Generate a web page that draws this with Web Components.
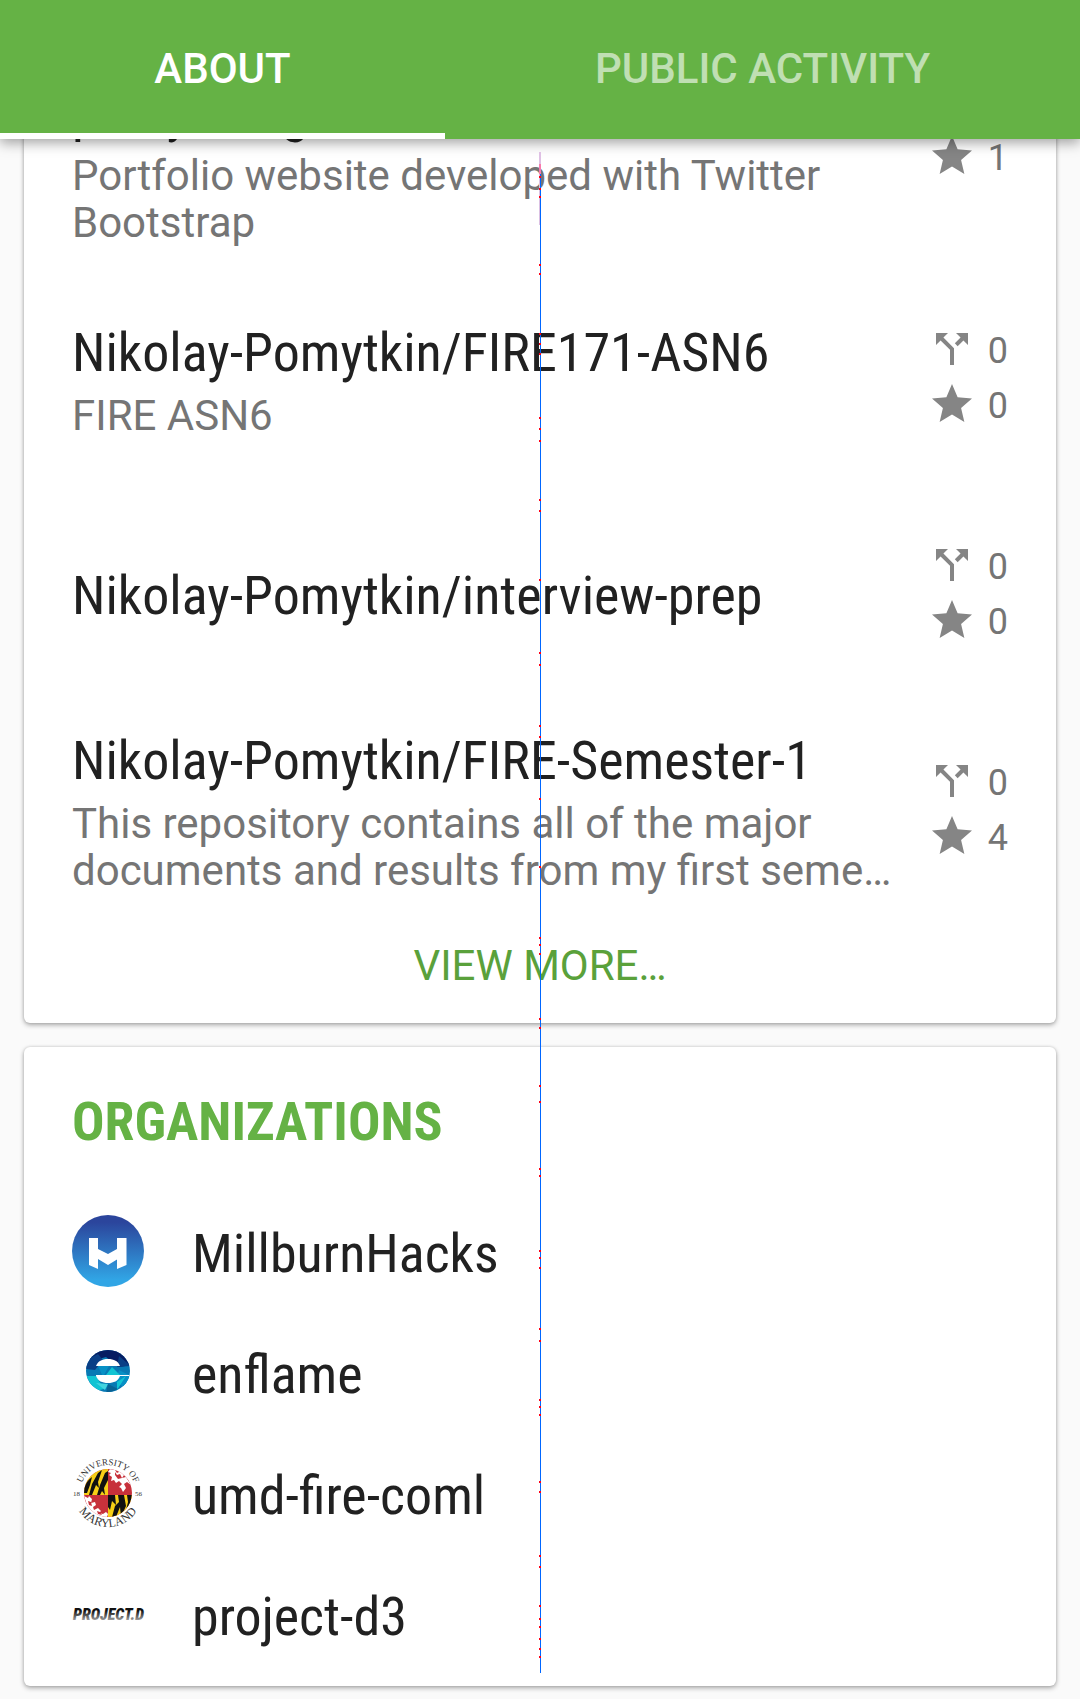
<!DOCTYPE html>
<html lang="en">
<head>
<meta charset="utf-8">
<meta name="viewport" content="width=device-width, initial-scale=1">
<title>Profile</title>
<style>
  body { margin: 0; background: #fafafa; font-family: Roboto, "Liberation Sans", sans-serif; color: #212121; }
  svg { overflow: visible; }
</style>
</head>
<body>
<profile-page>
  <tab-bar slot="tabs">
    <tab-item selected>ABOUT</tab-item>
    <tab-item>PUBLIC ACTIVITY</tab-item>
  </tab-bar>
  <info-card class="scrolled">
    <repo-row name="Nikolay-Pomytkin/&#10;pomytkin.github.io" forks="0" stars="1">Portfolio website developed with Twitter Bootstrap</repo-row>
    <repo-row name="Nikolay-Pomytkin/FIRE171-ASN6" forks="0" stars="0">FIRE ASN6</repo-row>
    <repo-row name="Nikolay-Pomytkin/interview-prep" forks="0" stars="0"></repo-row>
    <repo-row name="Nikolay-Pomytkin/FIRE-Semester-1" forks="0" stars="4">This repository contains all of the major documents and results from my first seme…</repo-row>
    <more-button>VIEW MORE…</more-button>
  </info-card>
  <info-card heading="ORGANIZATIONS">
    <org-row name="MillburnHacks">
      <svg width="72" height="72" viewBox="0 0 72 72"><defs><linearGradient id="mh" x2="0" y2="1"><stop offset=".1" stop-color="#2b459c"/><stop offset=".9" stop-color="#31a5e5"/></linearGradient></defs><circle cx="36" cy="36" r="36" fill="url(#mh)"/><path fill="#fff" d="M17 23h9v11l10 5 9-5V23h9.500v27l-9.500 4V44.500l-9 5.500-10-6v10l-9-4z"/></svg>
    </org-row>
    <org-row name="enflame">
      <svg width="72" height="72" viewBox="0 0 72 72"><defs><clipPath id="en"><ellipse cx="36" cy="35" rx="22" ry="21"/></clipPath></defs><g clip-path="url(#en)"><path fill="#0879b4" d="M12 12h48v48H12z"/><path fill="#061d62" d="M14 23l6-11h35l5 17-13 2-13-10-11 3z"/><path fill="#0a3f86" d="M14 24l12-6 5 6-8 10-9-1zM47 20l12 10-14 1z"/><path fill="#0790c5" d="M26 30h11l-6 11zM47 34l12 6-7 11-9-5z"/><path fill="#11c4d3" d="M40 31l8 8H34zM14 40h10l8 13-9 2zM45 46l9-6-9 14z"/><path fill="#42d3df" d="M24 47l12 1-3 6z"/><path fill="#086295" d="M36 48l10 5-12 5z"/><path fill="#fff" d="M24 30c2-5 6-7 12-7s10 2 12 7zM24 39h36v1H48c-2 5-6 7-12 7s-10-2-12-7z"/></g></svg>
    </org-row>
    <org-row name="umd-fire-coml">
      <svg width="72" height="72" viewBox="0 0 72 72"><defs><clipPath id="um"><circle cx="36" cy="36" r="24"/></clipPath><path id="ut" d="M8 36a28 28 0 0 1 56 0"/><path id="ub" d="M2 36a34 34 0 0 0 68 0"/></defs><g clip-path="url(#um)"><path fill="#c7313b" d="M12 10h48v52H12z"/><path fill="#f7cf16" d="M12 10h24v28H12zM36 38h24v24H36z"/><path fill="#111" d="M11 36c1-8 5-13 9-16l-2 8-3 8zM17 38l3-11 6-11 4-3-4 12 1 6-3-3-4 10zM25 38l3-10 5-12 3-2v9l-4 8 1 7-3-4-2 4zM36 38h7l1 10-4-4-2 9-2-3zM46 38h6l2 11-5 11-1-10-4 10h-4l3-11 4-4zM55 38h5l-2 9-4 6 2-8z"/><path fill="#fff" d="M38 12l5 1 2 3 4-2 3 4-2 3 4-1 5 8-4-3-3 2 2 4-3 4-2-4-2-1 3-3-3-3-3 2-2-3-3 1 1-4-3-2 2-2-3-1zM12 39l4 2 1-2 3 3-1 4 4-1 1 3-3 2 1 3 4-2 3 3-2 2 4 1 3-2 2 2-1 3h-7l-8-5-5-7z"/><path fill="#c7313b" d="M43 15l2 3 3-1 2 4-4 1-3-4zM16 44l3 1 1 4-3-1zM25 54l3 1 2 3-4-1z"/></g><g font-family="Liberation Serif, serif" fill="#333"><text font-size="9" text-anchor="middle"><textPath href="#ut" startOffset="50%">UNIVERSITY OF</textPath></text><text font-size="12" text-anchor="middle"><textPath href="#ub" startOffset="50%">MARYLAND</textPath></text><text x="1" y="39" font-size="7">18</text><text x="63" y="39" font-size="7">56</text></g></svg>
    </org-row>
    <org-row name="project-d3">
      <svg width="72" height="72" viewBox="0 0 72 72"><defs><linearGradient id="pd" x2="0" y2="1"><stop offset=".3" stop-color="#111"/><stop offset=".9" stop-color="#bbb"/></linearGradient></defs><text x="1" y="42" font-family="Roboto Condensed, sans-serif" font-size="16" font-weight="900" font-style="italic" fill="url(#pd)">PROJECT.D</text></svg>
    </org-row>
  </info-card>
  <trace-line slot="overlay"></trace-line>
</profile-page>

<script>
const define = (name, html, setup) => {
  const template = document.createElement('template');
  template.innerHTML = html;
  customElements.define(name, class extends HTMLElement {
    constructor() {
      super();
      this.attachShadow({ mode: 'open' }).append(template.content.cloneNode(true));
    }
    connectedCallback() { if (setup) setup(this, this.shadowRoot); }
  });
};

define('profile-page', `
  <style>
    :host { display: block; position: relative; }
    header { position: sticky; top: 0; z-index: 2; }
    main { display: flex; flex-direction: column; gap: 24px; padding: 0 24px 12px; overflow: clip; }
  </style>
  <header><slot name="tabs"></slot></header>
  <main><slot></slot></main>
  <slot name="overlay"></slot>`);

define('tab-bar', `
  <style>
    :host { display: flex; height: 139px; background: #65b245; box-shadow: 0 4px 12px rgba(0,0,0,.36); }
  </style>
  <slot></slot>`);

define('tab-item', `
  <style>
    :host { display: flex; flex: 635 1 0; }
    :host([selected]) { flex-grow: 445; }
    button { flex: 1; border: 0; border-bottom: 6px solid transparent; padding: 4px 0 0; background: none;
      font: 500 42px/48px Roboto, sans-serif; color: rgba(255,255,255,.6); }
    :host([selected]) button { color: #fff; border-color: #fff; }
  </style>
  <button type="button"><slot></slot></button>`);

define('info-card', `
  <style>
    :host { display: block; background: #fff; border-radius: 6px; padding: 0 48px 12px;
      box-shadow: 0 2px 5px rgba(0,0,0,.32), 0 0 3px rgba(0,0,0,.14); }
    :host(.scrolled) { margin-top: -149px; }
    h2 { margin: 0; padding: 43px 0 36px; font: 700 54px/64px "Roboto Condensed", Roboto, sans-serif; color: #65b245; }
    h2[hidden] { display: none; }
  </style>
  <h2 hidden></h2>
  <slot></slot>`, (host, root) => {
  const text = host.getAttribute('heading');
  if (text) { const h = root.querySelector('h2'); h.textContent = text; h.hidden = false; }
});

define('repo-row', `
  <style>
    :host { display: flex; align-items: center; box-sizing: border-box; min-height: 216px; padding: 24px 0; gap: 32px; }
    .text { flex: 1; min-width: 0; }
    h3 { margin: 0; padding-top: 3px; font: 400 54px/64px "Roboto Condensed", Roboto, sans-serif; white-space: pre-line; }
    p { margin: 7px 0 0; font-size: 42px; line-height: 47px; color: #757575; }
    p[hidden] { display: none; }
    .stats { padding-bottom: 4px; }
  </style>
  <div class="text"><h3></h3><p><slot></slot></p></div>
  <div class="stats"><stat-count icon="fork"></stat-count><stat-count icon="star"></stat-count></div>`, (host, root) => {
  root.querySelector('h3').textContent = host.getAttribute('name');
  root.querySelector('p').hidden = !host.textContent.trim();
  const [fork, star] = root.querySelectorAll('stat-count');
  fork.textContent = host.getAttribute('forks');
  star.textContent = host.getAttribute('stars');
});

define('stat-count', `
  <style>
    :host { display: flex; align-items: center; height: 55px; gap: 12px; font-size: 36px; color: #757575; }
    svg { width: 48px; height: 48px; fill: #858585; }
    span { padding-top: 4px; }
  </style>
  <svg viewBox="0 0 24 24" aria-hidden="true"><path/></svg><span><slot></slot></span>`, (host, root) => {
  root.querySelector('path').setAttribute('d', host.getAttribute('icon') === 'fork'
    ? 'M14 4l2.290 2.290-2.880 2.880 1.420 1.420 2.880-2.880L20 10V4zM10 4H4v6l2.290-2.290 4.710 4.700V20h2v-8.410l-5.290-5.300z'
    : 'M12 17.270L18.180 21l-1.640-7.030L22 9.240l-7.190-.610L12 2 9.190 8.630 2 9.240l5.460 4.730L5.820 21z');
});

define('more-button', `
  <style>
    :host { display: flex; }
    button { flex: 1; height: 93px; border: 0; padding: 2px 0 0; background: none; font: 400 42px/48px Roboto, sans-serif; color: #5aa13b; }
  </style>
  <button type="button"><slot></slot></button>`);

define('org-row', `
  <style>
    :host { display: flex; align-items: center; height: 121px; gap: 48px; }
    .avatar { display: flex; }
    .name { padding-top: 6px; font: 400 54px/64px "Roboto Condensed", Roboto, sans-serif; }
  </style>
  <div class="avatar"><slot></slot></div><div class="name"></div>`, (host, root) => {
  root.querySelector('.name').textContent = host.getAttribute('name');
});

define('trace-line', `
  <style>
    :host { position: absolute; z-index: 3; left: 50%; top: 152px; bottom: 25px; width: 2px; margin-left: -1px; pointer-events: none; }
    svg { display: block; width: 2px; height: 100%; }
  </style>
  <svg shape-rendering="crispEdges"></svg>`, (host, root) => {
  const dots = [176,188,196,264,273,333,343,353,417,428,440,499,510,579,652,664,725,736,798,866,937,944,953,1018,1027,1085,1101,1168,1175,1250,1257,1267,1328,1340,1399,1406,1414,1481,1491,1555,1566,1605,1618,1626,1638,1648,1656,1673];
  const rect = (x, y, w, h, fill) => `<rect x="${x}" y="${y}" width="${w}" height="${h}" fill="${fill}"/>`;
  root.querySelector('svg').innerHTML = rect(1, 20, 1, 1501, '#0066ff') + rect(0, 0, 2, 12, '#dfc0e4')
    + rect(0, 12, 2, 10, '#f87bac') + rect(0, 22, 1, 51, '#dcc0e2')
    + dots.map(y => rect(0, y - 152, 2, 2, '#ff0016')).join('');
});
</script>
</body>
</html>
